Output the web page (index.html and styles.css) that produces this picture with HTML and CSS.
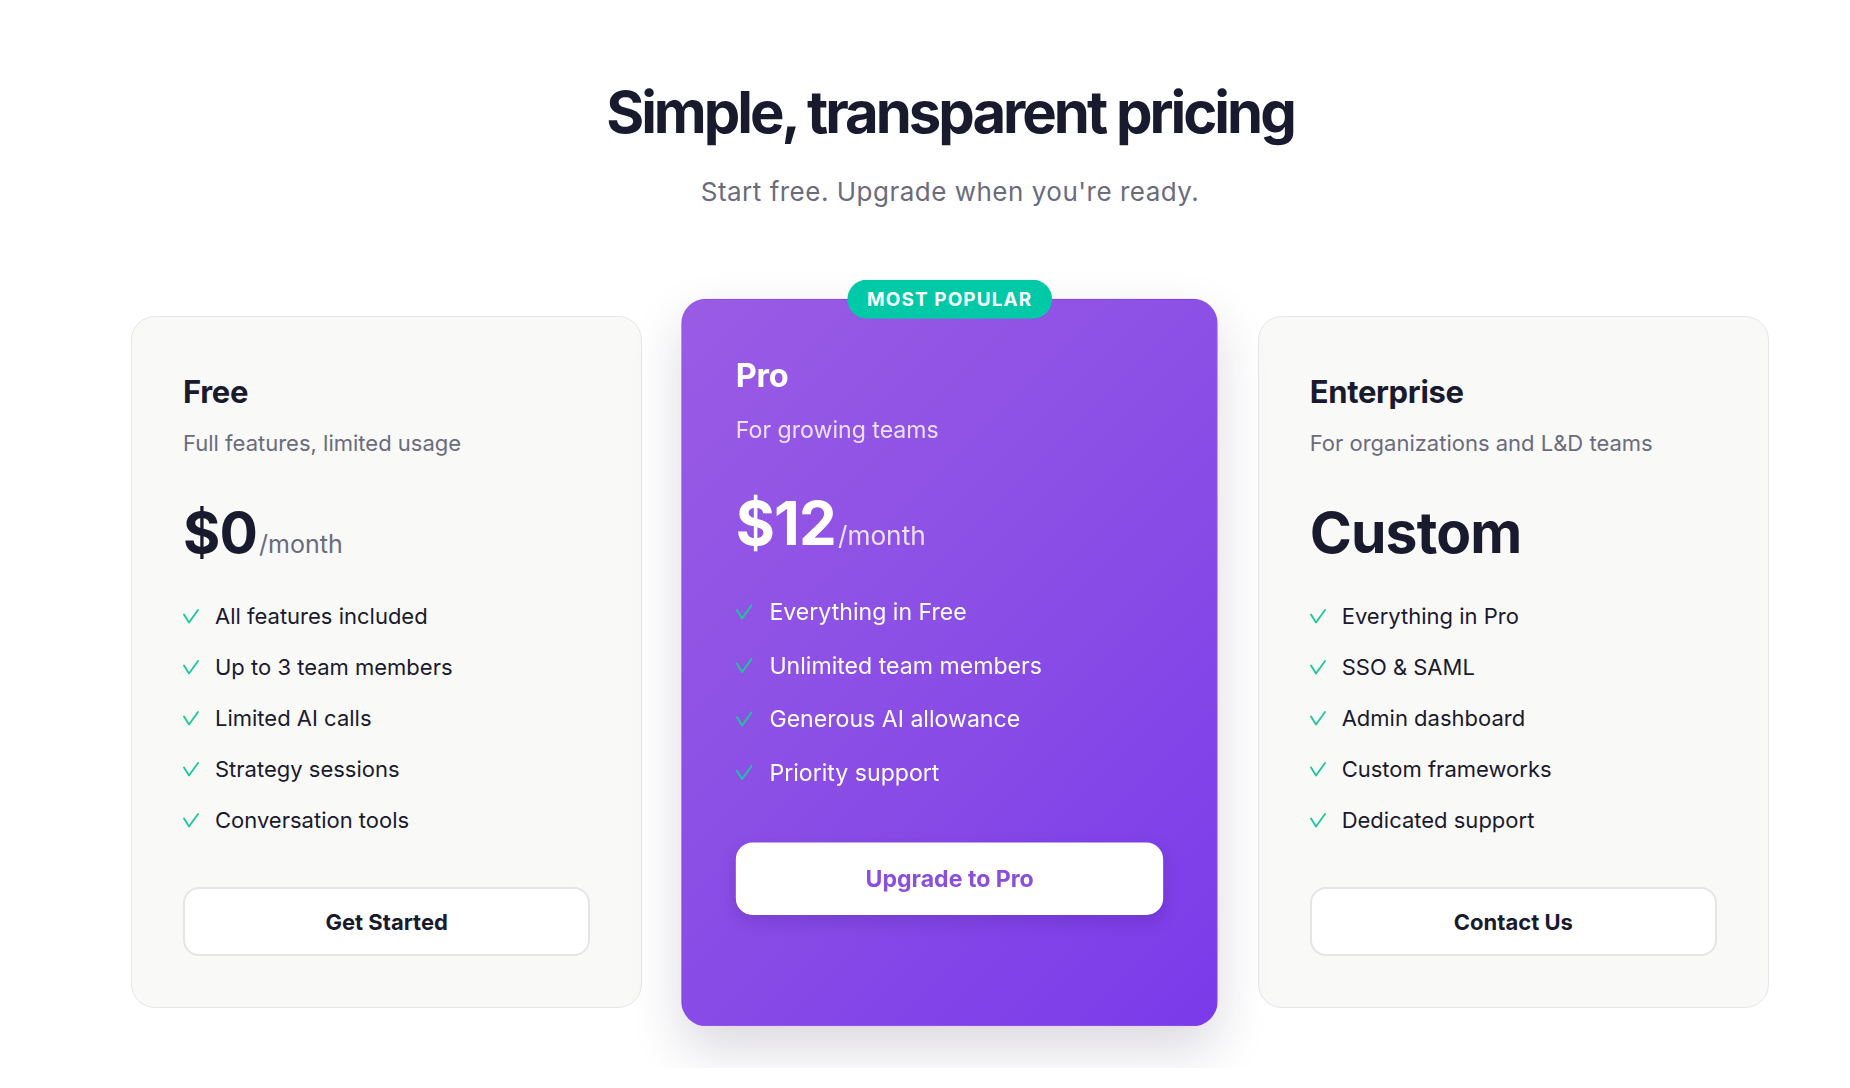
FILE: index.html
```html
<!DOCTYPE html>
<html lang="en">
<head>
<meta charset="utf-8">
<title>Pricing</title>
<link rel="stylesheet" href="styles.css">
</head>
<body>
<main class="page">
  <header class="hero">
    <h1 class="hero-title">Simple, transparent pricing</h1>
    <p class="hero-sub">Start free. Upgrade when you're ready.</p>
  </header>

  <section class="plans">
    <article class="plan">
      <h2 class="plan-name">Free</h2>
      <p class="plan-desc">Full features, limited usage</p>
      <div class="plan-price"><span class="amount">$0</span><span class="period">/month</span></div>
      <ul class="features">
        <li class="feature"><svg class="check" viewBox="0 0 16 15"><polyline points="1,5.5 6,13.5 15,1"/></svg><span>All features included</span></li>
        <li class="feature"><svg class="check" viewBox="0 0 16 15"><polyline points="1,5.5 6,13.5 15,1"/></svg><span>Up to 3 team members</span></li>
        <li class="feature"><svg class="check" viewBox="0 0 16 15"><polyline points="1,5.5 6,13.5 15,1"/></svg><span>Limited AI calls</span></li>
        <li class="feature"><svg class="check" viewBox="0 0 16 15"><polyline points="1,5.5 6,13.5 15,1"/></svg><span>Strategy sessions</span></li>
        <li class="feature"><svg class="check" viewBox="0 0 16 15"><polyline points="1,5.5 6,13.5 15,1"/></svg><span>Conversation tools</span></li>
      </ul>
      <button class="btn btn-outline">Get Started</button>
    </article>

    <article class="plan plan-pro">
      <span class="badge">MOST POPULAR</span>
      <h2 class="plan-name">Pro</h2>
      <p class="plan-desc">For growing teams</p>
      <div class="plan-price"><span class="amount">$12</span><span class="period">/month</span></div>
      <ul class="features">
        <li class="feature"><svg class="check" viewBox="0 0 16 15"><polyline points="1,5.5 6,13.5 15,1"/></svg><span>Everything in Free</span></li>
        <li class="feature"><svg class="check" viewBox="0 0 16 15"><polyline points="1,5.5 6,13.5 15,1"/></svg><span>Unlimited team members</span></li>
        <li class="feature"><svg class="check" viewBox="0 0 16 15"><polyline points="1,5.5 6,13.5 15,1"/></svg><span>Generous AI allowance</span></li>
        <li class="feature"><svg class="check" viewBox="0 0 16 15"><polyline points="1,5.5 6,13.5 15,1"/></svg><span>Priority support</span></li>
      </ul>
      <button class="btn btn-white">Upgrade to Pro</button>
    </article>

    <article class="plan">
      <h2 class="plan-name">Enterprise</h2>
      <p class="plan-desc">For organizations and L&amp;D teams</p>
      <div class="plan-price"><span class="amount">Custom</span></div>
      <ul class="features">
        <li class="feature"><svg class="check" viewBox="0 0 16 15"><polyline points="1,5.5 6,13.5 15,1"/></svg><span>Everything in Pro</span></li>
        <li class="feature"><svg class="check" viewBox="0 0 16 15"><polyline points="1,5.5 6,13.5 15,1"/></svg><span>SSO &amp; SAML</span></li>
        <li class="feature"><svg class="check" viewBox="0 0 16 15"><polyline points="1,5.5 6,13.5 15,1"/></svg><span>Admin dashboard</span></li>
        <li class="feature"><svg class="check" viewBox="0 0 16 15"><polyline points="1,5.5 6,13.5 15,1"/></svg><span>Custom frameworks</span></li>
        <li class="feature"><svg class="check" viewBox="0 0 16 15"><polyline points="1,5.5 6,13.5 15,1"/></svg><span>Dedicated support</span></li>
      </ul>
      <button class="btn btn-outline">Contact Us</button>
    </article>
  </section>
</main>
</body>
</html>
```

FILE: styles.css
```css
* { box-sizing: border-box; }

html, body {
  margin: 0;
  padding: 0;
  background: #ffffff;
}

body {
  font-family: Inter, "Noto Sans", "Liberation Sans", sans-serif;
  color: #1a1a2e;
}

.page {
  padding: 78px 81px 60px 131px;
}

.hero {
  text-align: center;
}

.hero-title {
  margin: 0;
  font-size: 58px;
  line-height: 1.2;
  font-weight: 700;
  letter-spacing: -3px;
  color: #1a1a2e;
}

.hero-sub {
  margin: 24px 0 0;
  font-size: 26px;
  line-height: 1.5;
  letter-spacing: 0.5px;
  color: #6b6b7e;
}

.plans {
  margin-top: 105px;
  display: grid;
  grid-template-columns: repeat(3, 1fr);
  gap: 52px;
  align-items: stretch;
}

.plan {
  position: relative;
  background: #f9f9f8;
  border: 1px solid #e6e6ea;
  border-radius: 24px;
  padding: 52px 51px 51px;
  display: flex;
  flex-direction: column;
  align-items: stretch;
}

.plan-name {
  margin: 0;
  font-size: 31px;
  line-height: 1.5;
  font-weight: 700;
  letter-spacing: -0.01em;
  color: #1a1a2e;
}

.plan-desc {
  margin: 12px 0 0;
  font-size: 22px;
  line-height: 1.5;
  color: #6b6b7e;
}

.plan-price {
  margin-top: 39px;
  display: flex;
  align-items: baseline;
}

.amount {
  font-size: 57px;
  line-height: 1.2;
  font-weight: 700;
  letter-spacing: -0.015em;
  color: #1a1a2e;
}

.period {
  font-size: 25px;
  color: #6b6b7e;
  margin-left: 2px;
}

.features {
  list-style: none;
  margin: 33px 0 0;
  padding: 0;
  display: flex;
  flex-direction: column;
  gap: 18px;
}

.feature {
  display: flex;
  align-items: center;
  gap: 16px;
  font-size: 22px;
  line-height: 1.5;
  color: #1a1a2e;
}

.check {
  width: 16px;
  height: 15px;
  flex: none;
  fill: none;
  stroke: #1cc79b;
  stroke-width: 1.8;
  stroke-linecap: round;
  stroke-linejoin: round;
}

.btn {
  margin-top: 50px;
  width: 100%;
  height: 69px;
  border-radius: 16px;
  font-family: inherit;
  font-size: 22px;
  font-weight: 700;
  cursor: pointer;
}

.btn-outline {
  background: #ffffff;
  border: 2px solid #e5e5e5;
  color: #1a1a2e;
}

/* Pro */
.plan-pro {
  padding-top: 49px;
  background: linear-gradient(135deg, #9a5be4 0%, #8a4ee6 50%, #7b3aea 100%);
  border-color: transparent;
  transform: scale(1.05);
  box-shadow: 0 22px 50px rgba(30, 20, 60, 0.16);
  z-index: 1;
}

.plan-pro .plan-name,
.plan-pro .amount,
.plan-pro .feature {
  color: #ffffff;
}

.plan-pro .plan-desc,
.plan-pro .period {
  color: rgba(255, 255, 255, 0.82);
}

.btn-white {
  background: #ffffff;
  border: 2px solid #ffffff;
  color: #8b4fe0;
  box-shadow: 0 6px 16px rgba(40, 10, 90, 0.18);
}

.badge {
  position: absolute;
  top: -19px;
  left: 50%;
  transform: translateX(-50%);
  background: #00c9a7;
  color: #ffffff;
  font-size: 18px;
  font-weight: 700;
  letter-spacing: 0.06em;
  line-height: 27px;
  padding: 5px 19px;
  border-radius: 999px;
  white-space: nowrap;
}
```
